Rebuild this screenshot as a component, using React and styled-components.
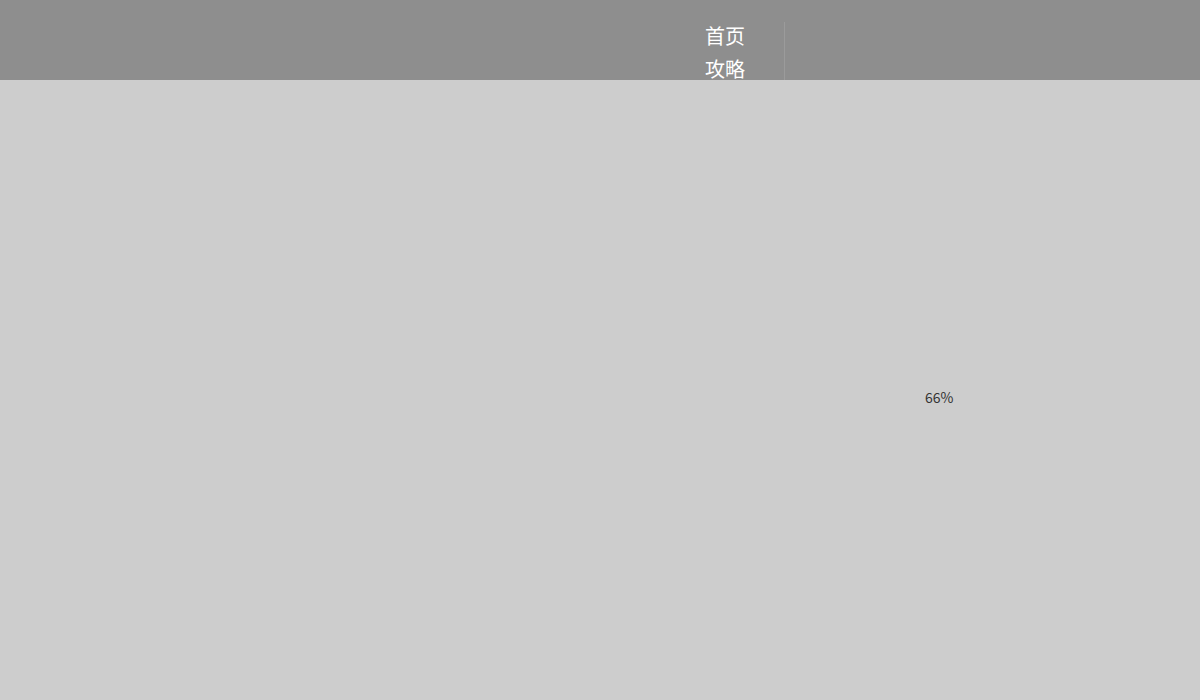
import styled, { createGlobalStyle } from "styled-components";

const GlobalStyle = createGlobalStyle`
  html, body {
    margin: 0;
    padding: 0;
    height: 100%;
    background: #cdcdcd;
    font-family: "Noto Sans CJK SC", "Noto Sans", sans-serif;
  }
  #root {
    min-height: 100%;
  }
`;

const Page = styled.div`
  width: 100%;
  min-height: 100vh;
  display: flex;
  flex-direction: column;
  background: #cdcdcd;
`;

const Header = styled.header`
  height: 80px;
  background: #8e8e8e;
  display: flex;
  align-items: stretch;
  overflow: hidden;
  flex-shrink: 0;
`;

const Nav = styled.ul`
  list-style: none;
  margin: 0 0 0 705px;
  padding: 19px 0 0 0;
  width: 40px;
`;

const NavItem = styled.li`
  font-size: 20px;
  line-height: 33px;
  color: #ffffff;
  white-space: nowrap;
`;

const Divider = styled.div`
  width: 1px;
  margin: 22px 0 0 39px;
  background: #9b9b9b;
`;

const Main = styled.main`
  flex: 1;
  padding: 304px 0 0 925px;
`;

const Progress = styled.span`
  font-family: "Noto Sans CJK SC", sans-serif;
  font-size: 14px;
  line-height: 20px;
  color: #333333;
`;

export default function App() {
  return (
    <>
      <GlobalStyle />
      <Page>
        <Header>
          <Nav>
            <NavItem>首页</NavItem>
            <NavItem>攻略</NavItem>
          </Nav>
          <Divider />
        </Header>
        <Main>
          <Progress>66%</Progress>
        </Main>
      </Page>
    </>
  );
}
